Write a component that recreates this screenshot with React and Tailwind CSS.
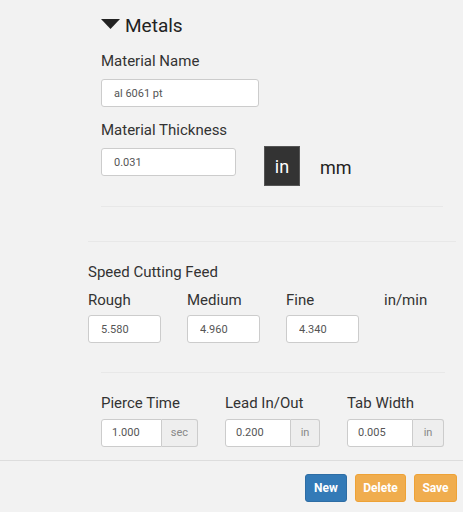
const font = { fontFamily: "Roboto, 'Liberation Sans', sans-serif" };

const TextInput = ({ value, className }) => (
  <input
    readOnly
    value={value}
    className={`h-[28px] rounded-[3px] border border-[#ccc] bg-white pl-[12px] text-[11px] text-[#555] outline-none ${className}`}
  />
);

const AddonInput = ({ value, unit, inputWidth, addonWidth }) => (
  <div className="flex h-[28px]">
    <input
      readOnly
      value={value}
      className={`${inputWidth} rounded-l-[3px] border border-[#ccc] bg-white pl-[10px] text-[11px] text-[#555] outline-none`}
    />
    <span
      className={`${addonWidth} flex items-center justify-center rounded-r-[3px] border border-l-0 border-[#ccc] bg-[#eee] text-[11px] text-[#888]`}
    >
      {unit}
    </span>
  </div>
);

const Label = ({ children, className = "" }) => (
  <div className={`text-[15px] leading-[20px] text-[#333] ${className}`}>{children}</div>
);

export default function App() {
  return (
    <div className="h-[512px] w-[463px] overflow-hidden bg-[#f2f2f2]" style={font}>
      {/* material details */}
      <div className="pl-[101px] pt-[14px]">
        <div className="flex items-center">
          <svg width="19" height="10" viewBox="0 0 19 10" className="mr-[5px] mt-[-4px]">
            <polygon points="0,0 19,0 9.5,10" fill="#222" />
          </svg>
          <span className="text-[19px] leading-[24px] text-[#222]">Metals</span>
        </div>
        <Label className="mt-[13px]">Material Name</Label>
        <TextInput value="al 6061 pt" className="mt-[8px] w-[158px]" />
        <Label className="mt-[13px]">Material Thickness</Label>
        <div className="mt-[6px] flex items-start">
          <TextInput value="0.031" className="mt-[2px] w-[135px]" />
          <div className="ml-[28px] flex h-[40px] w-[36px] items-center justify-center border border-[#555] bg-[#333] text-[18px] text-white">
            in
          </div>
          <div className="ml-[20px] mt-[8px] text-[18px] text-[#222]">mm</div>
        </div>
        <div className="mt-[20px] mr-[20px] border-t border-[#e8e8e8]" />
      </div>
      <div className="mx-[7px] ml-[88px] mt-[34px] border-t border-[#e8e8e8]" />

      {/* feed rates */}
      <div className="pl-[88px] pt-[20px]">
        <Label>Speed Cutting Feed</Label>
        <div className="mt-[8px] flex">
          <div className="w-[99px]">
            <Label>Rough</Label>
            <TextInput value="5.580" className="mt-[5px] w-[73px]" />
          </div>
          <div className="w-[99px]">
            <Label>Medium</Label>
            <TextInput value="4.960" className="mt-[5px] w-[73px]" />
          </div>
          <div className="w-[98px]">
            <Label>Fine</Label>
            <TextInput value="4.340" className="mt-[5px] w-[73px]" />
          </div>
          <Label>in/min</Label>
        </div>
      </div>
      <div className="ml-[101px] mr-[18px] mt-[29px] border-t border-[#e8e8e8]" />

      {/* pierce / lead / tab */}
      <div className="flex pl-[101px] pt-[20px]">
        <div className="w-[124px]">
          <Label>Pierce Time</Label>
          <div className="mt-[6px]">
            <AddonInput value="1.000" unit="sec" inputWidth="w-[61px]" addonWidth="w-[36px]" />
          </div>
        </div>
        <div className="w-[122px]">
          <Label>Lead In/Out</Label>
          <div className="mt-[6px]">
            <AddonInput value="0.200" unit="in" inputWidth="w-[66px]" addonWidth="w-[29px]" />
          </div>
        </div>
        <div>
          <Label>Tab Width</Label>
          <div className="mt-[6px]">
            <AddonInput value="0.005" unit="in" inputWidth="w-[66px]" addonWidth="w-[31px]" />
          </div>
        </div>
      </div>

      {/* footer actions */}
      <div className="mt-[13px] flex justify-end gap-[8px] border-t border-[#ddd] pr-[6px] pt-[13px]">
        <button className="h-[28px] w-[42px] rounded-[3px] border border-[#2e6da4] bg-[#337ab7] text-[12px] font-bold text-white">
          New
        </button>
        <button className="h-[28px] w-[51px] rounded-[3px] border border-[#eea236] bg-[#f0ad4e] text-[12px] font-bold text-white">
          Delete
        </button>
        <button className="h-[28px] w-[43px] rounded-[3px] border border-[#eea236] bg-[#f0ad4e] text-[12px] font-bold text-white">
          Save
        </button>
      </div>
    </div>
  );
}
